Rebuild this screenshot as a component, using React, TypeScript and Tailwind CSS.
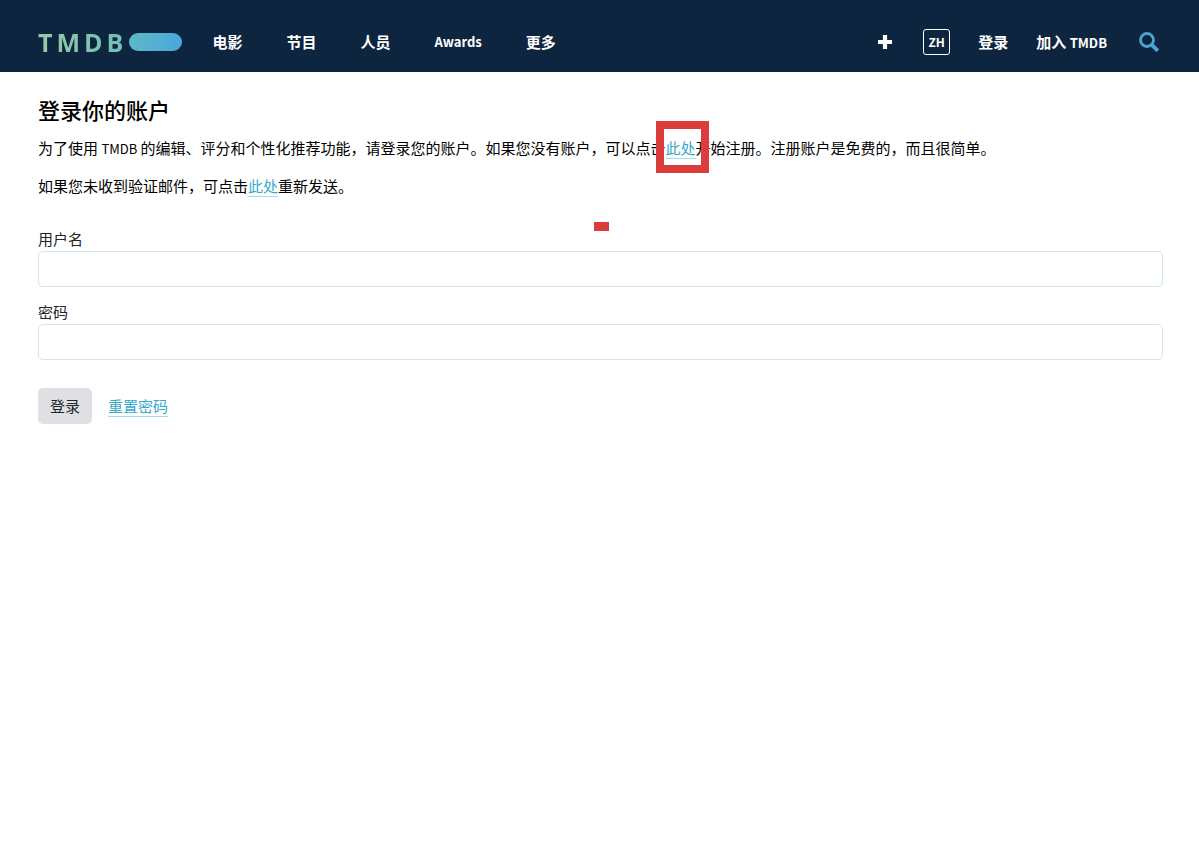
import { useState } from 'react';

type NavItem = {
  label: string;
  href: string;
  className?: string;
};

const navItems: NavItem[] = [
  { label: '电影', href: '#movie' },
  { label: '节目', href: '#tv' },
  { label: '人员', href: '#person' },
  { label: 'Awards', href: '#awards', className: 'text-[13px]' },
  { label: '更多', href: '#more' },
];

const linkClass = 'border-b border-[#a5dcea] text-[#35a9ca]';

function Logo() {
  return (
    <a href="#home" aria-label="TMDB" className="flex items-center gap-1.5">
      <span className="flex gap-1 bg-linear-to-r from-[#98c9a5] to-[#70bfb9] bg-clip-text font-['Open_Sans',sans-serif] text-[25px] leading-7 font-bold text-transparent">
        <span>T</span>
        <span>M</span>
        <span>D</span>
        <span>B</span>
      </span>
      <span className="h-[18px] w-[53px] rounded-full bg-linear-to-r from-[#5cb9c6] to-[#4ba6dc]" />
    </a>
  );
}

function PlusIcon() {
  return (
    <svg className="size-4" viewBox="0 0 16 16" fill="currentColor" aria-hidden="true">
      <path d="M5.9 1h4.2v4.9H15v4.2h-4.9V15H5.9v-4.9H1V5.9h4.9z" />
    </svg>
  );
}

function SearchIcon() {
  return (
    <svg className="size-5" viewBox="0 0 20 20" fill="none" stroke="currentColor" aria-hidden="true">
      <circle cx="8" cy="8" r="6.5" strokeWidth="2.8" />
      <path d="M12.8 12.8l6 6" strokeWidth="3.8" />
    </svg>
  );
}

function Header() {
  return (
    <header className="flex h-[72px] items-center justify-between bg-[#0d253f] pt-3 pr-10 pl-[38px] leading-6 font-bold text-white">
      <div className="flex items-center gap-[30px]">
        <Logo />
        <nav className="flex items-center gap-11">
          {navItems.map((item) => (
            <a key={item.label} href={item.href} className={item.className}>
              {item.label}
            </a>
          ))}
        </nav>
      </div>
      <div className="flex items-center gap-7">
        <button type="button" aria-label="添加" className="mr-0.5">
          <PlusIcon />
        </button>
        <button
          type="button"
          className="flex h-[26px] w-[27px] items-center justify-center rounded-[3px] border border-white text-[12px] leading-4"
        >
          ZH
        </button>
        <a href="#login">登录</a>
        <a href="#signup">
          加入 <span className="text-[13px]">TMDB</span>
        </a>
        <button type="button" aria-label="搜索" className="ml-1 text-[#4ba3d3]">
          <SearchIcon />
        </button>
      </div>
    </header>
  );
}

type FieldProps = {
  id: string;
  label: string;
  type: string;
  value: string;
  className: string;
  onChange: (value: string) => void;
};

function Field({ id, label, type, value, className, onChange }: FieldProps) {
  return (
    <div>
      <label htmlFor={id} className="block text-[#212529]">
        {label}
      </label>
      <input
        id={id}
        type={type}
        value={value}
        className={`block h-9 w-full rounded-[5px] border px-3 outline-none ${className}`}
        onChange={(event) => onChange(event.target.value)}
      />
    </div>
  );
}

export default function App() {
  const [username, setUsername] = useState('');
  const [password, setPassword] = useState('');

  return (
    <div className="min-h-screen bg-white font-['Noto_Sans_CJK_SC',sans-serif] text-[15px] leading-[25px] text-black">
      <Header />
      <main className="relative pt-5 pr-9 pl-[38px]">
        <h1 className="text-[22px] leading-[34px] font-medium">登录你的账户</h1>
        <p className="mt-[9px]">
          为了使用 <span className="text-[13px]">TMDB</span> 的编辑、评分和个性化推荐功能，请登录您的账户。如果您没有账户，可以点击
          <span className="relative">
            <a href="#signup" className={linkClass}>
              此处
            </a>
            <span className="absolute -top-4 -left-2.5 h-[52px] w-[53px] border-8 border-[#dc3c3c]" />
          </span>
          开始注册。注册账户是免费的，而且很简单。
        </p>
        <p className="mt-3">
          如果您未收到验证邮件，可点击
          <a href="#resend" className={linkClass}>
            此处
          </a>
          重新发送。
        </p>
        <span className="absolute top-[150px] left-1/2 h-[9px] w-[15px] -translate-x-1.5 bg-[#dc3c3c]" />
        <form className="mt-7" onSubmit={(event) => event.preventDefault()}>
          <div className="grid gap-3">
            <Field
              id="username"
              label="用户名"
              type="text"
              value={username}
              className="border-[#cde4ea]"
              onChange={setUsername}
            />
            <Field
              id="password"
              label="密码"
              type="password"
              value={password}
              className="border-[#dfe1e3]"
              onChange={setPassword}
            />
          </div>
          <div className="mt-7 flex items-center gap-4 leading-6">
            <button type="submit" className="h-9 rounded-[5px] bg-[#dee0e4] px-3 text-[#212529]">
              登录
            </button>
            <a href="#reset" className="text-[#35a9ca] underline decoration-[#a5dcea] underline-offset-4">
              重置密码
            </a>
          </div>
        </form>
      </main>
    </div>
  );
}
